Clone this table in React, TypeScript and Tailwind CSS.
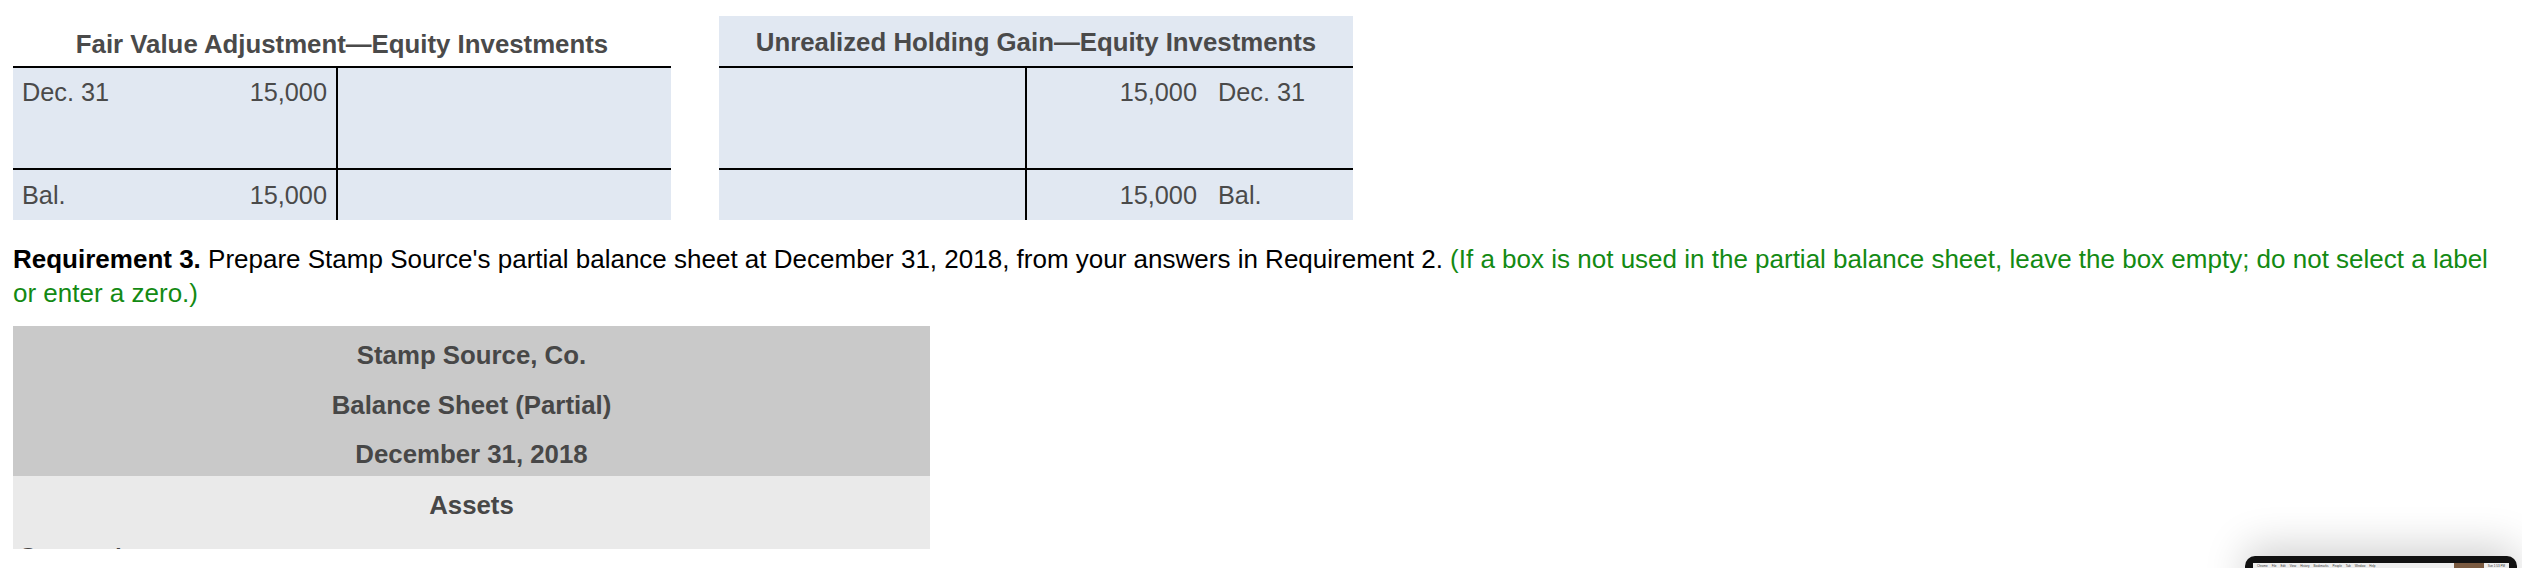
import React from 'react';

const font = { fontFamily: '"Liberation Sans", Arial, Helvetica, sans-serif' };

const TRow: React.FC<{
  h: string;
  leftW: string;
  left?: React.ReactNode;
  right?: React.ReactNode;
  top?: boolean;
}> = ({ h, leftW, left, right, top }) => {
  return (
    <div className={`flex ${h} bg-[#e1e8f2]`}>
      <div className={`${leftW} flex ${top ? 'pt-[9px]' : 'items-center'}`}>{left}</div>
      <div className="w-[2px] bg-black" />
      <div className={`flex-1 flex ${top ? 'pt-[9px]' : 'items-center'}`}>{right}</div>
    </div>
  );
};

const Amount: React.FC<{ label: string; amount: string }> = ({ label, amount }) => (
  <div className="flex w-full justify-between pl-[9px] pr-[9px] text-[25.3px] leading-[30px] text-[#4a4a4a]">
    <span>{label}</span>
    <span>{amount}</span>
  </div>
);

const CreditAmount: React.FC<{ label: string; amount: string }> = ({ label, amount }) => (
  <div className="flex w-full text-[25.3px] leading-[30px] text-[#4a4a4a]">
    <span className="w-[180px] pr-[10px] text-right">{amount}</span>
    <span className="pl-[11px]">{label}</span>
  </div>
);

export default function App() {
  return (
    <div className="relative w-[2522px] h-[568px] bg-white overflow-hidden" style={font}>
      <div className="h-[549px] overflow-hidden">
        {/* T accounts */}
        <div className="flex gap-[48px] pl-[13px] pt-[16px]">
          <div className="w-[658px] flex flex-col">
            <div className="h-[50px] pt-[6px] flex items-center justify-center font-bold text-[25.8px] text-[#4a4a4a]">
              Fair Value Adjustment—Equity Investments
            </div>
            <div className="h-[2px] bg-black" />
            <TRow h="h-[100px]" leftW="w-[323px]" top left={<Amount label="Dec. 31" amount="15,000" />} />
            <div className="h-[2px] bg-black" />
            <TRow h="h-[50px]" leftW="w-[323px]" left={<Amount label="Bal." amount="15,000" />} />
          </div>

          <div className="w-[634px] flex flex-col">
            <div className="h-[50px] pt-[2px] flex items-center justify-center bg-[#e1e8f2] font-bold text-[25.8px] text-[#4a4a4a]">
              Unrealized Holding Gain—Equity Investments
            </div>
            <div className="h-[2px] bg-black" />
            <TRow h="h-[100px]" leftW="w-[306px]" top right={<CreditAmount label="Dec. 31" amount="15,000" />} />
            <div className="h-[2px] bg-black" />
            <TRow h="h-[50px]" leftW="w-[306px]" right={<CreditAmount label="Bal." amount="15,000" />} />
          </div>
        </div>

        {/* Requirement text */}
        <p className="mt-[22px] pl-[13px] w-[2505px] text-[26px] leading-[34px] text-black">
          <span className="font-bold">Requirement 3.</span> Prepare Stamp Source's partial balance sheet at December 31,
          2018, from your answers in Requirement 2.{' '}
          <span className="text-[#138a13]">
            (If a box is not used in the partial balance sheet, leave the box empty; do not select a label or enter a
            zero.)
          </span>
        </p>

        {/* Balance sheet */}
        <div className="mt-[16px] ml-[13px] w-[917px] flex flex-col text-[25.8px] text-[#474747]">
          <div className="bg-[#c9c9c9] font-bold">
            <div className="h-[50px] pt-[8px] flex items-center justify-center">Stamp Source, Co.</div>
            <div className="h-[50px] pt-[8px] flex items-center justify-center">Balance Sheet (Partial)</div>
            <div className="h-[50px] pt-[6px] flex items-center justify-center">December 31, 2018</div>
          </div>
          <div className="bg-[#eaeaea]">
            <div className="h-[52px] pt-[6px] flex items-center justify-center font-bold">Assets</div>
            <div className="h-[50px] pt-[14px] pl-[5px] leading-[30px]">Current Assets</div>
            <div className="h-[50px]" />
          </div>
        </div>
      </div>

      {/* screenshot thumbnail */}
      <div className="absolute left-[2245px] top-[556px] w-[272px] h-[60px] rounded-[10px] bg-[#111] shadow-[0_-10px_40px_rgba(0,0,0,0.18)] px-[8px] pt-[7px]">
        <div className="h-[5px] bg-[#eeeeee] flex items-center gap-[4px] px-[4px] text-[3px] leading-[4px] text-[#333] overflow-hidden">
          <span>Chrome</span>
          <span>File</span>
          <span>Edit</span>
          <span>View</span>
          <span>History</span>
          <span>Bookmarks</span>
          <span>People</span>
          <span>Tab</span>
          <span>Window</span>
          <span>Help</span>
          <span className="ml-auto w-[30px] h-[5px] bg-[#7a5a40]" />
          <span>Sun 1:53 PM</span>
        </div>
      </div>
    </div>
  );
}
